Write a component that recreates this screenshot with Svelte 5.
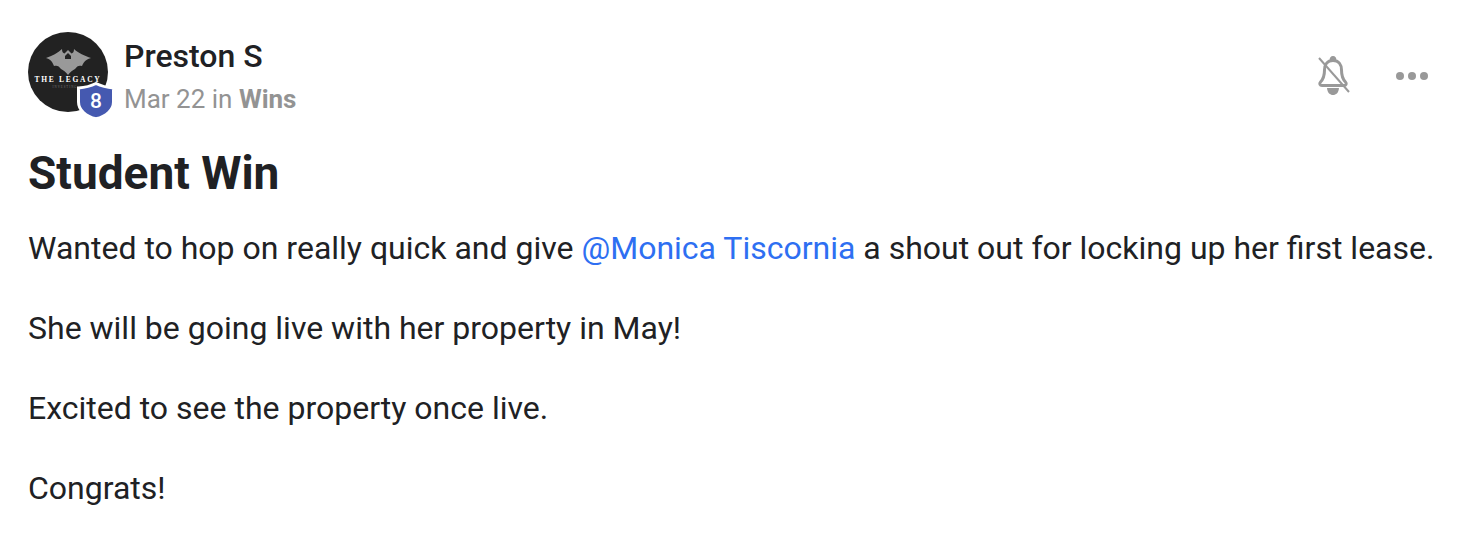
<script>
  const paragraphs = [
    "She will be going live with her property in May!",
    "Excited to see the property once live.",
    "Congrats!"
  ];
</script>

<main class="post">
  <header class="head">
    <div class="avatar-wrap">
      <svg class="avatar" viewBox="0 0 80 80" width="80" height="80">
        <circle cx="40" cy="40" r="40" fill="#222222" />
        <path d="M18 26 C24 24 30 21 34 17 C34 20 35 21 36.500 21.500 L40 18 L43.500 21.500 C45 21 46 20 46 17 C50 21 57 24 63 26 C59 27 56 29 54 34 C51 33 49 34 47 37 C45 38 42 40 40 43 C38 40 35 38 33 37 C31 34 29 33 26 34 C24 29 22 27 18 26 Z" fill="#999999" />
        <path d="M40 21 L43 24 L43 27 L37 27 L37 24 Z" fill="#222222" />
        <text x="40" y="50" class="legacy">THE LEGACY</text>
        <text x="37" y="55.500" class="investing">INVESTING</text>
      </svg>
      <svg class="badge" viewBox="0 0 38 38" width="38" height="38">
        <path d="M19 1.500 C24 4 30 5.500 36.500 6 L36.500 20 C36.500 28 29 34.500 19 36.800 C9 34.500 1.500 28 1.500 20 L1.500 6 C8 5.500 14 4 19 1.500 Z" fill="#4559b0" stroke="#ffffff" stroke-width="3" />
        <text x="19" y="25.500" class="level">8</text>
      </svg>
    </div>
    <div class="meta">
      <div class="name">Preston S</div>
      <div class="sub">Mar 22 in <strong>Wins</strong></div>
    </div>
    <div class="actions">
      <svg viewBox="0 0 36 44" width="36" height="44" fill="none">
        <path d="M18 2 a3.200 3.200 0 0 1 3.200 4 L14.800 6 a3.200 3.200 0 0 1 3.200 -4 Z" fill="#999999" />
        <path d="M18 6.500 C12 6.500 9.500 11 9.500 16 C9.500 22 8.500 25 5.500 28 C4 29.500 5 31.500 7 31.500 L29 31.500 C31 31.500 32 29.500 30.500 28 C27.500 25 26.500 22 26.500 16 C26.500 11 24 6.500 18 6.500 Z" stroke="#999999" stroke-width="3" />
        <path d="M12 34 L24 34 C23.500 39 21 41 18 41 C15 41 12.500 39 12 34 Z" fill="#999999" />
        <path d="M4 4 L34 38" stroke="#999999" stroke-width="2" />
      </svg>
      <svg viewBox="0 0 34 10" width="34" height="10">
        <circle cx="5" cy="5" r="4" fill="#999999" />
        <circle cx="17" cy="5" r="4" fill="#999999" />
        <circle cx="29" cy="5" r="4" fill="#999999" />
      </svg>
    </div>
  </header>

  <h1>Student Win</h1>

  <div class="body">
    <p>Wanted to hop on really quick and give <span class="mention">@Monica Tiscornia</span> a shout out for locking up her first lease.</p>
    {#each paragraphs as text}
      <p>{text}</p>
    {/each}
  </div>
</main>

<style>
  :global(body) {
    margin: 0;
    background: #ffffff;
  }
  .post {
    box-sizing: border-box;
    width: 1475px;
    height: 534px;
    padding: 32px 28px 0 28px;
    font-family: Roboto, "Liberation Sans", sans-serif;
    color: #202124;
    overflow: hidden;
  }
  .head {
    display: flex;
    align-items: flex-start;
    height: 90px;
  }
  .avatar-wrap {
    position: relative;
    width: 80px;
    height: 80px;
    flex: none;
  }
  .avatar {
    display: block;
  }
  .legacy {
    font-family: "Liberation Serif", serif;
    font-size: 7.500px;
    font-weight: 700;
    letter-spacing: 1.700px;
    fill: #ffffff;
    text-anchor: middle;
  }
  .investing {
    font-family: "Liberation Serif", serif;
    font-size: 3px;
    letter-spacing: 1px;
    fill: #777777;
    text-anchor: middle;
  }
  .badge {
    position: absolute;
    left: 49px;
    top: 50px;
  }
  .level {
    font-family: Roboto, sans-serif;
    font-size: 21px;
    font-weight: 500;
    fill: #ffffff;
    text-anchor: middle;
  }
  .meta {
    margin-left: 16px;
    flex: 1;
  }
  .name {
    font-size: 32px;
    font-weight: 500;
    line-height: 36px;
    margin-top: 6px;
    color: #202124;
  }
  .sub {
    font-size: 26px;
    line-height: 32px;
    margin-top: 9px;
    color: #939393;
  }
  .sub strong {
    font-weight: 700;
  }
  .actions {
    display: flex;
    align-items: center;
    gap: 44px;
    margin-top: 22px;
    margin-right: 18px;
  }
  h1 {
    margin: 25px 0 0 0;
    font-size: 46px;
    line-height: 52px;
    font-weight: 700;
    color: #202124;
  }
  .body {
    margin-top: 29px;
  }
  p {
    margin: 0 0 40px 0;
    font-size: 32px;
    line-height: 40px;
  }
  .mention {
    color: #2e6ff2;
  }
</style>
